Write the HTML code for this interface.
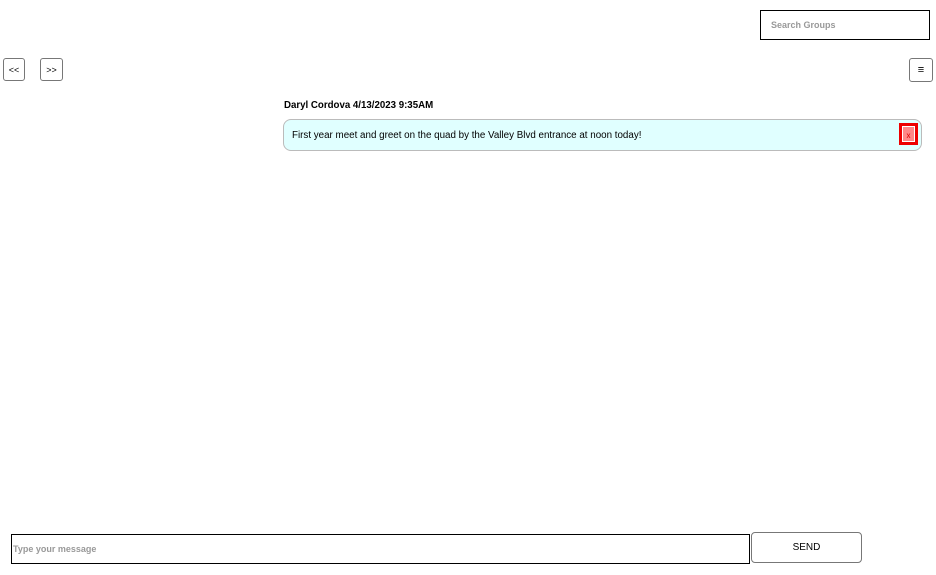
<!DOCTYPE html>
<html><head><style>
body{margin:0;width:936px;height:575px;background:#fff;font-family:"Liberation Sans",Arial,sans-serif;position:relative;overflow:hidden}
.a{position:absolute;box-sizing:border-box}
.btn{border:1px solid #777;border-radius:3px;background:#fff;font-size:9px;display:flex;align-items:center;justify-content:center;color:#000}
</style></head><body>
<div class="a" style="left:760px;top:10px;width:170px;height:30px;border:1px solid #000;font-size:9px;color:#999;padding:9px 0 0 10px;font-weight:bold">Search Groups</div>
<div class="a btn" style="left:3px;top:58px;width:22px;height:23px">&lt;&lt;</div>
<div class="a btn" style="left:40px;top:58px;width:23px;height:23px">&gt;&gt;</div>
<div class="a btn" style="left:909px;top:58px;width:24px;height:24px;font-size:11px">≡</div>
<div class="a" style="left:284px;top:100px;font-size:9.7px;font-weight:bold">Daryl Cordova 4/13/2023 9:35AM</div>
<div class="a" style="left:283px;top:119px;width:639px;height:32px;background:#e0ffff;border:1px solid #bbb;border-radius:8px;font-size:9.8px;padding:10px 0 0 8px">First year meet and greet on the quad by the Valley Blvd entrance at noon today!</div>
<div class="a" style="left:899px;top:123px;width:19px;height:22px;border:3px solid #e00;background:#fff;padding:1px">
<div style="width:100%;height:100%;background:#f88;color:#d00;font-size:8px;text-align:center;line-height:18px">x</div></div>
<div class="a" style="left:11px;top:534px;width:739px;height:30px;border:1px solid #000;font-size:9px;color:#999;padding:9px 0 0 1px;font-weight:bold">Type your message</div>
<div class="a btn" style="left:751px;top:532px;width:111px;height:31px;border-radius:4px;font-size:10px">SEND</div>
</body></html>
